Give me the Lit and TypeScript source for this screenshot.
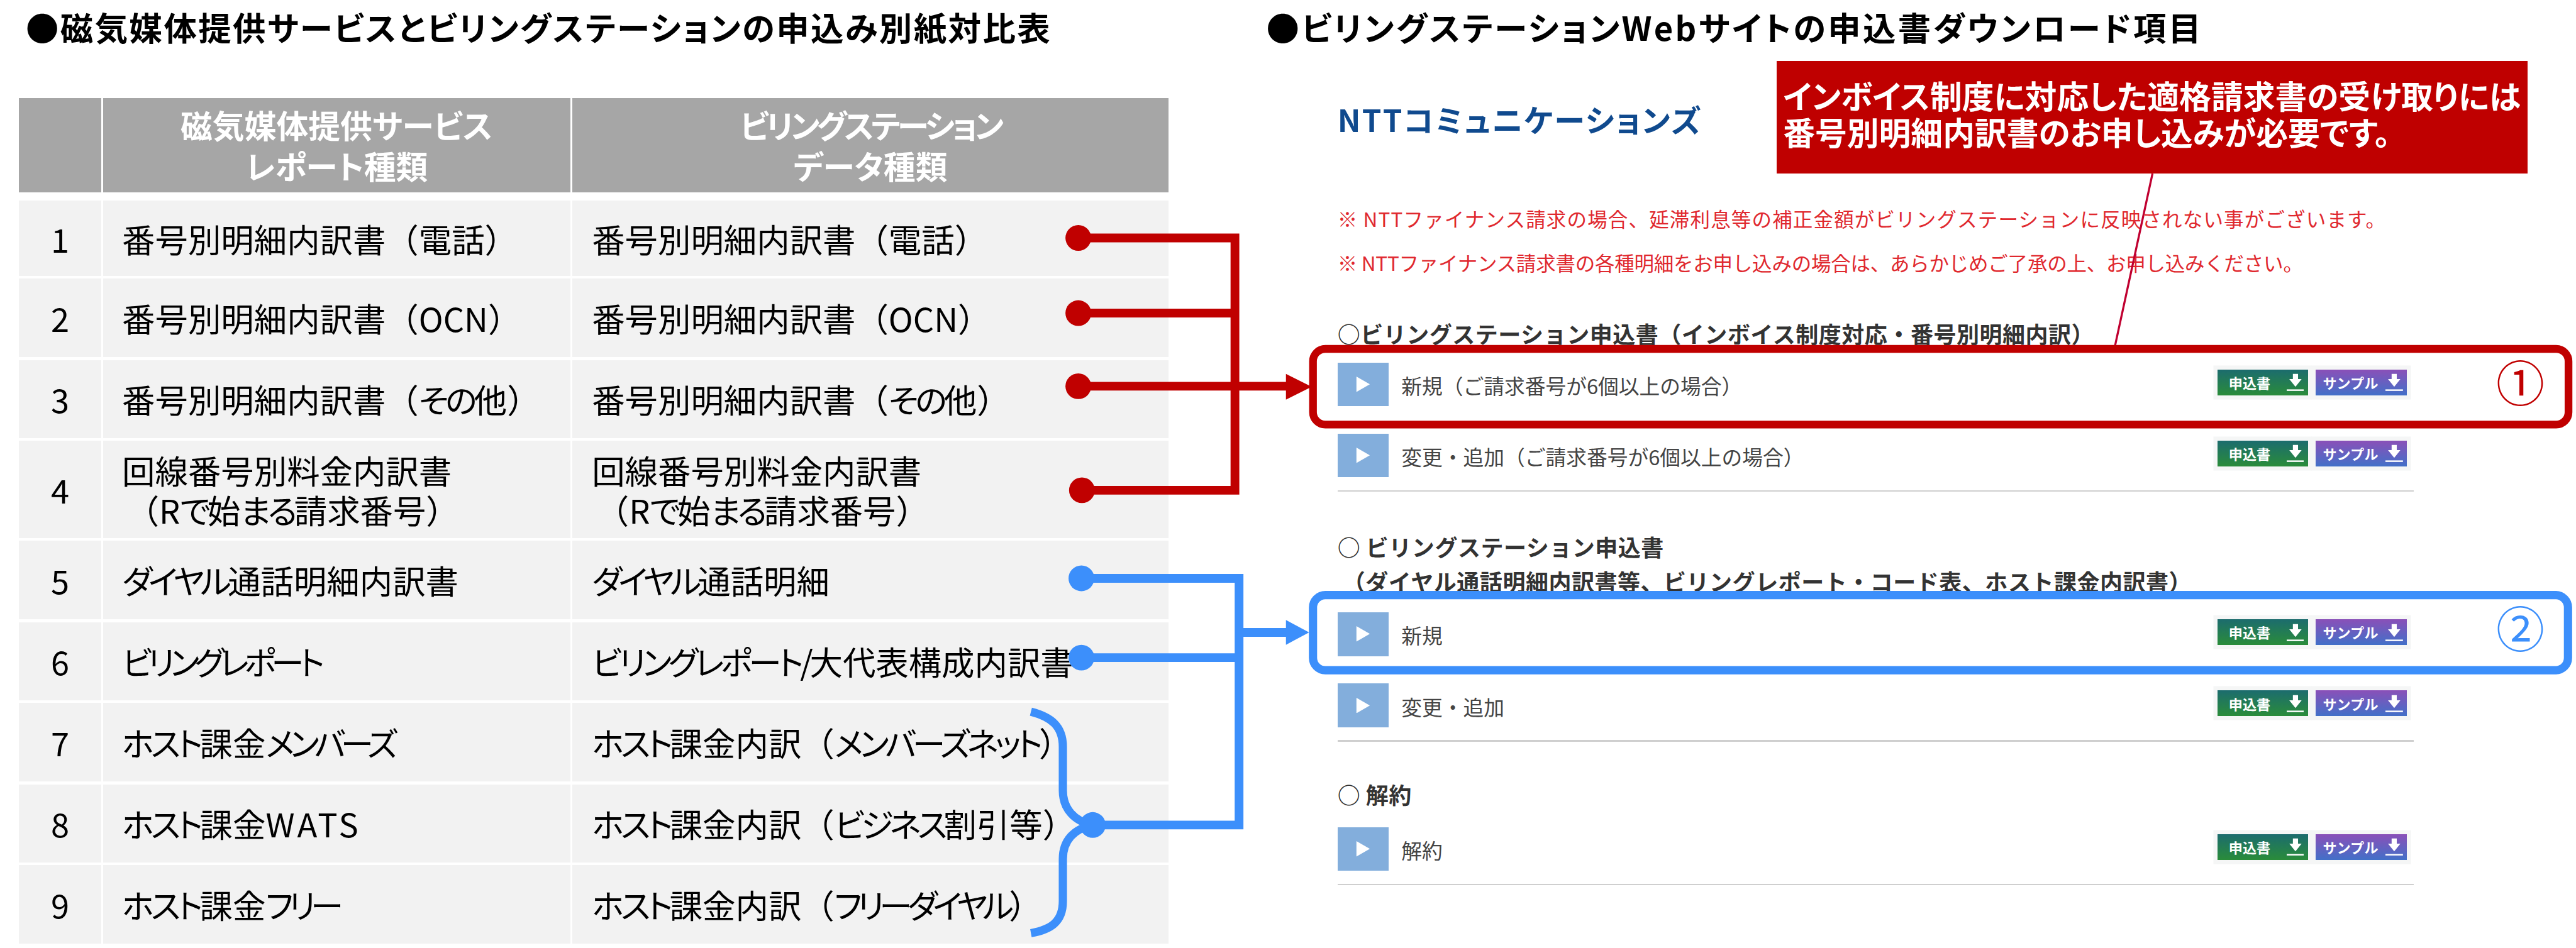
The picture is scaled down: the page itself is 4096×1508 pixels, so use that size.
import { LitElement, html, css, svg } from "lit";
import { customElement } from "lit/decorators.js";

const k = (s: string, ls?: number) =>
  ls === undefined ? html`<span class="k">${s}</span>` : html`<span class="k" style="letter-spacing:${ls}px">${s}</span>`;

const rows: [string, any, any][] = [
  ["1", "番号別明細内訳書（電話）", "番号別明細内訳書（電話）"],
  ["2", "番号別明細内訳書（OCN）", "番号別明細内訳書（OCN）"],
  ["3", html`番号別明細内訳書（${k("その")}他）`, html`番号別明細内訳書（${k("その")}他）`],
  [
    "4",
    html`回線番号別料金内訳書<br /><span class="ind">（R${k("で")}始${k("まる")}請求番号）</span>`,
    html`回線番号別料金内訳書<br /><span class="ind">（R${k("で")}始${k("まる")}請求番号）</span>`,
  ],
  ["5", html`${k("ダイヤル", -7)}通話明細内訳書`, html`${k("ダイヤル", -7)}通話明細`],
  ["6", k("ビリングレポート", -9), html`${k("ビリングレポート/", -6.5)}大代表構成内訳書`],
  ["7", html`${k("ホスト")}課金${k("メンバーズ", -9)}`, html`${k("ホスト")}課金内訳（${k("メンバーズネット", -7)}）`],
  ["8", html`${k("ホスト")}課金<span class="lat">WATS</span>`, html`${k("ホスト")}課金内訳（${k("ビジネス", -7)}割引等）`],
  ["9", html`${k("ホスト")}課金${k("フリー", -9)}`, html`${k("ホスト")}課金内訳（${k("フリーダイヤル", -9)}）`],
];

const RED = "#C00000";
const BLUE = "#3C8FFB";

@customElement("app-root")
export class AppRoot extends LitElement {
  static styles = css`
    :host {
      display: block;
      zoom: 0.8192;
      width: 5000px;
      height: 1840px;
      overflow: hidden;
      position: relative;
      background: #fff;
      color: #000;
      font-family: "Noto Sans CJK JP", "Noto Sans", sans-serif;
    }
    .shell { display: flex; width: 5000px; height: 1840px; }
    .left { width: 2458px; padding-left: 37px; box-sizing: border-box; flex: none; }
    .right { flex: 1; }
    .title {
      height: 104px; line-height: 104px; font-size: 64px; font-weight: 700;
      white-space: nowrap; letter-spacing: 3px; font-feature-settings: "palt";
    }
    .right .title { letter-spacing: 4px; }
    .left .title { margin-left: 13px; }
    .table {
      margin-top: 86px; width: 2231px; display: grid;
      grid-template-columns: 159px 907px 1157px; column-gap: 4px;
      grid-template-rows: 195px 146px 153px 152px 189px 153px 152px 153px 152px 152px;
      row-gap: 5px;
    }
    .th {
      background: #a6a6a6; color: #fff; font-weight: 700; font-size: 62px; line-height: 79px;
      display: flex; align-items: center; justify-content: center; text-align: center;
      margin-bottom: 11px; font-feature-settings: "palt";
    }
    .tight { letter-spacing: -5.7px; }
    .td {
      background: #f2f2f2; font-size: 64px; line-height: 77px; font-weight: 400;
      display: flex; align-items: center; white-space: nowrap;
    }
    .k { font-feature-settings: "palt"; letter-spacing: -6px; }
    .lat { letter-spacing: 5px; }
    .num { justify-content: center; }
    .c1 { padding-left: 37px; }
    .c2 { padding-left: 38px; }
    .ind { margin-left: 8px; }
    .page { margin-left: 138px; width: 2089px; }
    .logo {
      margin-top: 87px; height: 80px; line-height: 80px; font-size: 60px; font-weight: 700;
      color: #104a8e; letter-spacing: 2.8px; font-feature-settings: "palt";
    }
    .notes { margin-top: 111px; color: #e0282e; font-size: 38.5px; line-height: 85px; white-space: nowrap; font-weight: 400; }
    .n1 { letter-spacing: 1.4px; }
    .n2 { letter-spacing: -0.3px; }
    .head { font-size: 44px; font-weight: 700; color: #333; white-space: nowrap; letter-spacing: 0.6px; }
    .h1 { margin-top: 66px; line-height: 60px; }
    .h2 { margin-top: 73px; line-height: 67px; }
    .h3 { margin-top: 73px; line-height: 60px; }
    .sub { padding-left: 10px; }
    .row { height: 85px; display: flex; align-items: center; }
    .row.first { margin-top: 26px; }
    .row.second { margin-top: 53px; }
    .row.r2 { margin-top: 27px; }
    .row.r3 { margin-top: 33px; }
    .ico { width: 99px; height: 85px; background: #83aedc; flex: none; display: flex; align-items: center; justify-content: center; }
    .ico svg { display: block; }
    .label { margin-left: 25px; padding-top: 3px; font-size: 40px; color: #444; white-space: nowrap; flex: 1; font-weight: 400; }
    .btns { display: flex; gap: 15px; margin-right: 13px; margin-top: -8px; }
    .btn {
      height: 50px; display: flex; align-items: center; position: relative; color: #fff;
      font-size: 27px; font-weight: 700; box-shadow: 0 0 0 8px #f5f6f6; font-feature-settings: "palt";
    }
    .btn.g { width: 176px; background: linear-gradient(#1c6c6e, #2a8c3a); padding-left: 22px; box-sizing: border-box; }
    .btn.p { width: 177px; background: linear-gradient(#8a50b8, #4270c8); padding-left: 14px; box-sizing: border-box; letter-spacing: 2px; }
    .dl { position: absolute; right: 8px; top: 8px; display: block; }
    .rule { height: 3px; background: #cfcfcf; margin-top: 25px; }
    .overlay { position: absolute; left: 0; top: 0; pointer-events: none; }
    .callout {
      position: absolute; left: 3448px; top: 119px; width: 1458px; height: 218px; box-sizing: border-box;
      background: #bf0000; color: #fff; font-weight: 700; font-size: 62px; line-height: 71px;
      padding: 30px 0 0 13px; white-space: nowrap; font-feature-settings: "palt";
    }
    .mark { position: absolute; font-size: 94px; line-height: 100px; width: 100px; text-align: center; left: 4842px; font-weight: 400; }
  `;

  private row(label: string, cls: string) {
    return html`<div class="row ${cls}">
      <div class="ico"><svg width="28" height="30" viewBox="0 0 28 30"><path d="M1 0 L27 15 L1 30 Z" fill="#fff" /></svg></div>
      <div class="label">${label}</div>
      <div class="btns">
        <div class="btn g">申込書${this.dl()}</div>
        <div class="btn p">サンプル${this.dl()}</div>
      </div>
    </div>`;
  }

  private dl() {
    return html`<svg class="dl" width="34" height="36" viewBox="0 0 34 36">
      <path d="M12 1 H22 V11 H29 L17 26 L5 11 H12 Z" fill="#fff" /><rect x="0" y="31" width="34" height="3" fill="#fff" />
    </svg>`;
  }

  private overlay() {
    const dot = (x: number, y: number, c: string) => svg`<circle cx=${x} cy=${y} r="25" fill=${c} />`;
    const line = (d: string, c: string, w = 17) => svg`<path d=${d} fill="none" stroke=${c} stroke-width=${w} />`;
    return html`<svg class="overlay" width="5000" height="1840" viewBox="0 0 5000 1840">
      <path d="M4178 337 L4103 682" stroke="#c00030" stroke-width="4" fill="none" />
      ${line("M2093 462 H2397 M2093 608 H2397 M2093 750 H2500 M2100 952 H2397 M2397 453.5 V960.5", RED)}
      <path d="M2496 726 L2546 751 L2496 776 Z" fill=${RED} />
      ${dot(2093, 462, RED)} ${dot(2093, 608, RED)} ${dot(2093, 750, RED)} ${dot(2100, 952, RED)}
      <rect x="2548.5" y="677.5" width="2437" height="147" rx="24" fill="none" stroke=${RED} stroke-width="15" />

      ${line("M2099 1123 H2405 M2099 1277 H2405 M2121 1602 H2405 M2405 1114.5 V1610.5 M2405 1228 H2500", BLUE)}
      <path d="M2496 1204 L2541 1228 L2496 1252 Z" fill=${BLUE} />
      ${line("M2001 1382 C2040 1392 2063 1410 2063 1450 V1535 C2063 1570 2085 1595 2121 1602 C2085 1609 2063 1632 2063 1668 V1750 C2063 1790 2040 1805 2001 1812", BLUE, 16)}
      ${dot(2099, 1123, BLUE)} ${dot(2099, 1277, BLUE)} ${dot(2121, 1602, BLUE)}
      <rect x="2548.5" y="1155.5" width="2436" height="146" rx="24" fill="none" stroke=${BLUE} stroke-width="16" />
    </svg>`;
  }

  render() {
    return html`
      <div class="shell">
        <section class="left">
          <div class="title">●磁気媒体提供サービスとビリングステーションの申込み別紙対比表</div>
          <div class="table">
            <div class="th"></div>
            <div class="th"><div>磁気媒体提供サービス<br />レポート種類</div></div>
            <div class="th"><div><span class="tight">ビリングステーション</span><br />データ種類</div></div>
            ${rows.map(
              ([n, a, b]) => html`<div class="td num">${n}</div><div class="td c1"><div>${a}</div></div><div class="td c2"><div>${b}</div></div>`
            )}
          </div>
        </section>
        <section class="right">
          <div class="title">●ビリングステーションWebサイトの申込書ダウンロード項目</div>
          <div class="page">
            <div class="logo">NTTコミュニケーションズ</div>
            <div class="notes">
              <div class="n1">※ NTTファイナンス請求の場合、延滞利息等の補正金額がビリングステーションに反映されない事がございます。</div>
              <div class="n2">※ NTTファイナンス請求書の各種明細をお申し込みの場合は、あらかじめご了承の上、お申し込みください。</div>
            </div>
            <div class="head h1">○ビリングステーション申込書（インボイス制度対応・番号別明細内訳）</div>
            ${this.row("新規（ご請求番号が6個以上の場合）", "first")}
            ${this.row("変更・追加（ご請求番号が6個以上の場合）", "second")}
            <div class="rule"></div>
            <div class="head h2">○ ビリングステーション申込書<br /><span class="sub">（ダイヤル通話明細内訳書等、ビリングレポート・コード表、ホスト課金内訳書）</span></div>
            ${this.row("新規", "r2")}
            ${this.row("変更・追加", "second")}
            <div class="rule"></div>
            <div class="head h3">○ 解約</div>
            ${this.row("解約", "r3")}
            <div class="rule"></div>
          </div>
        </section>
      </div>
      ${this.overlay()}
      <div class="callout">インボイス制度に対応した適格請求書の受け取りには<br />番号別明細内訳書のお申し込みが必要です。</div>
      <div class="mark" style="top:690px;color:${RED}">①</div>
      <div class="mark" style="top:1167px;color:${BLUE}">②</div>
    `;
  }
}
